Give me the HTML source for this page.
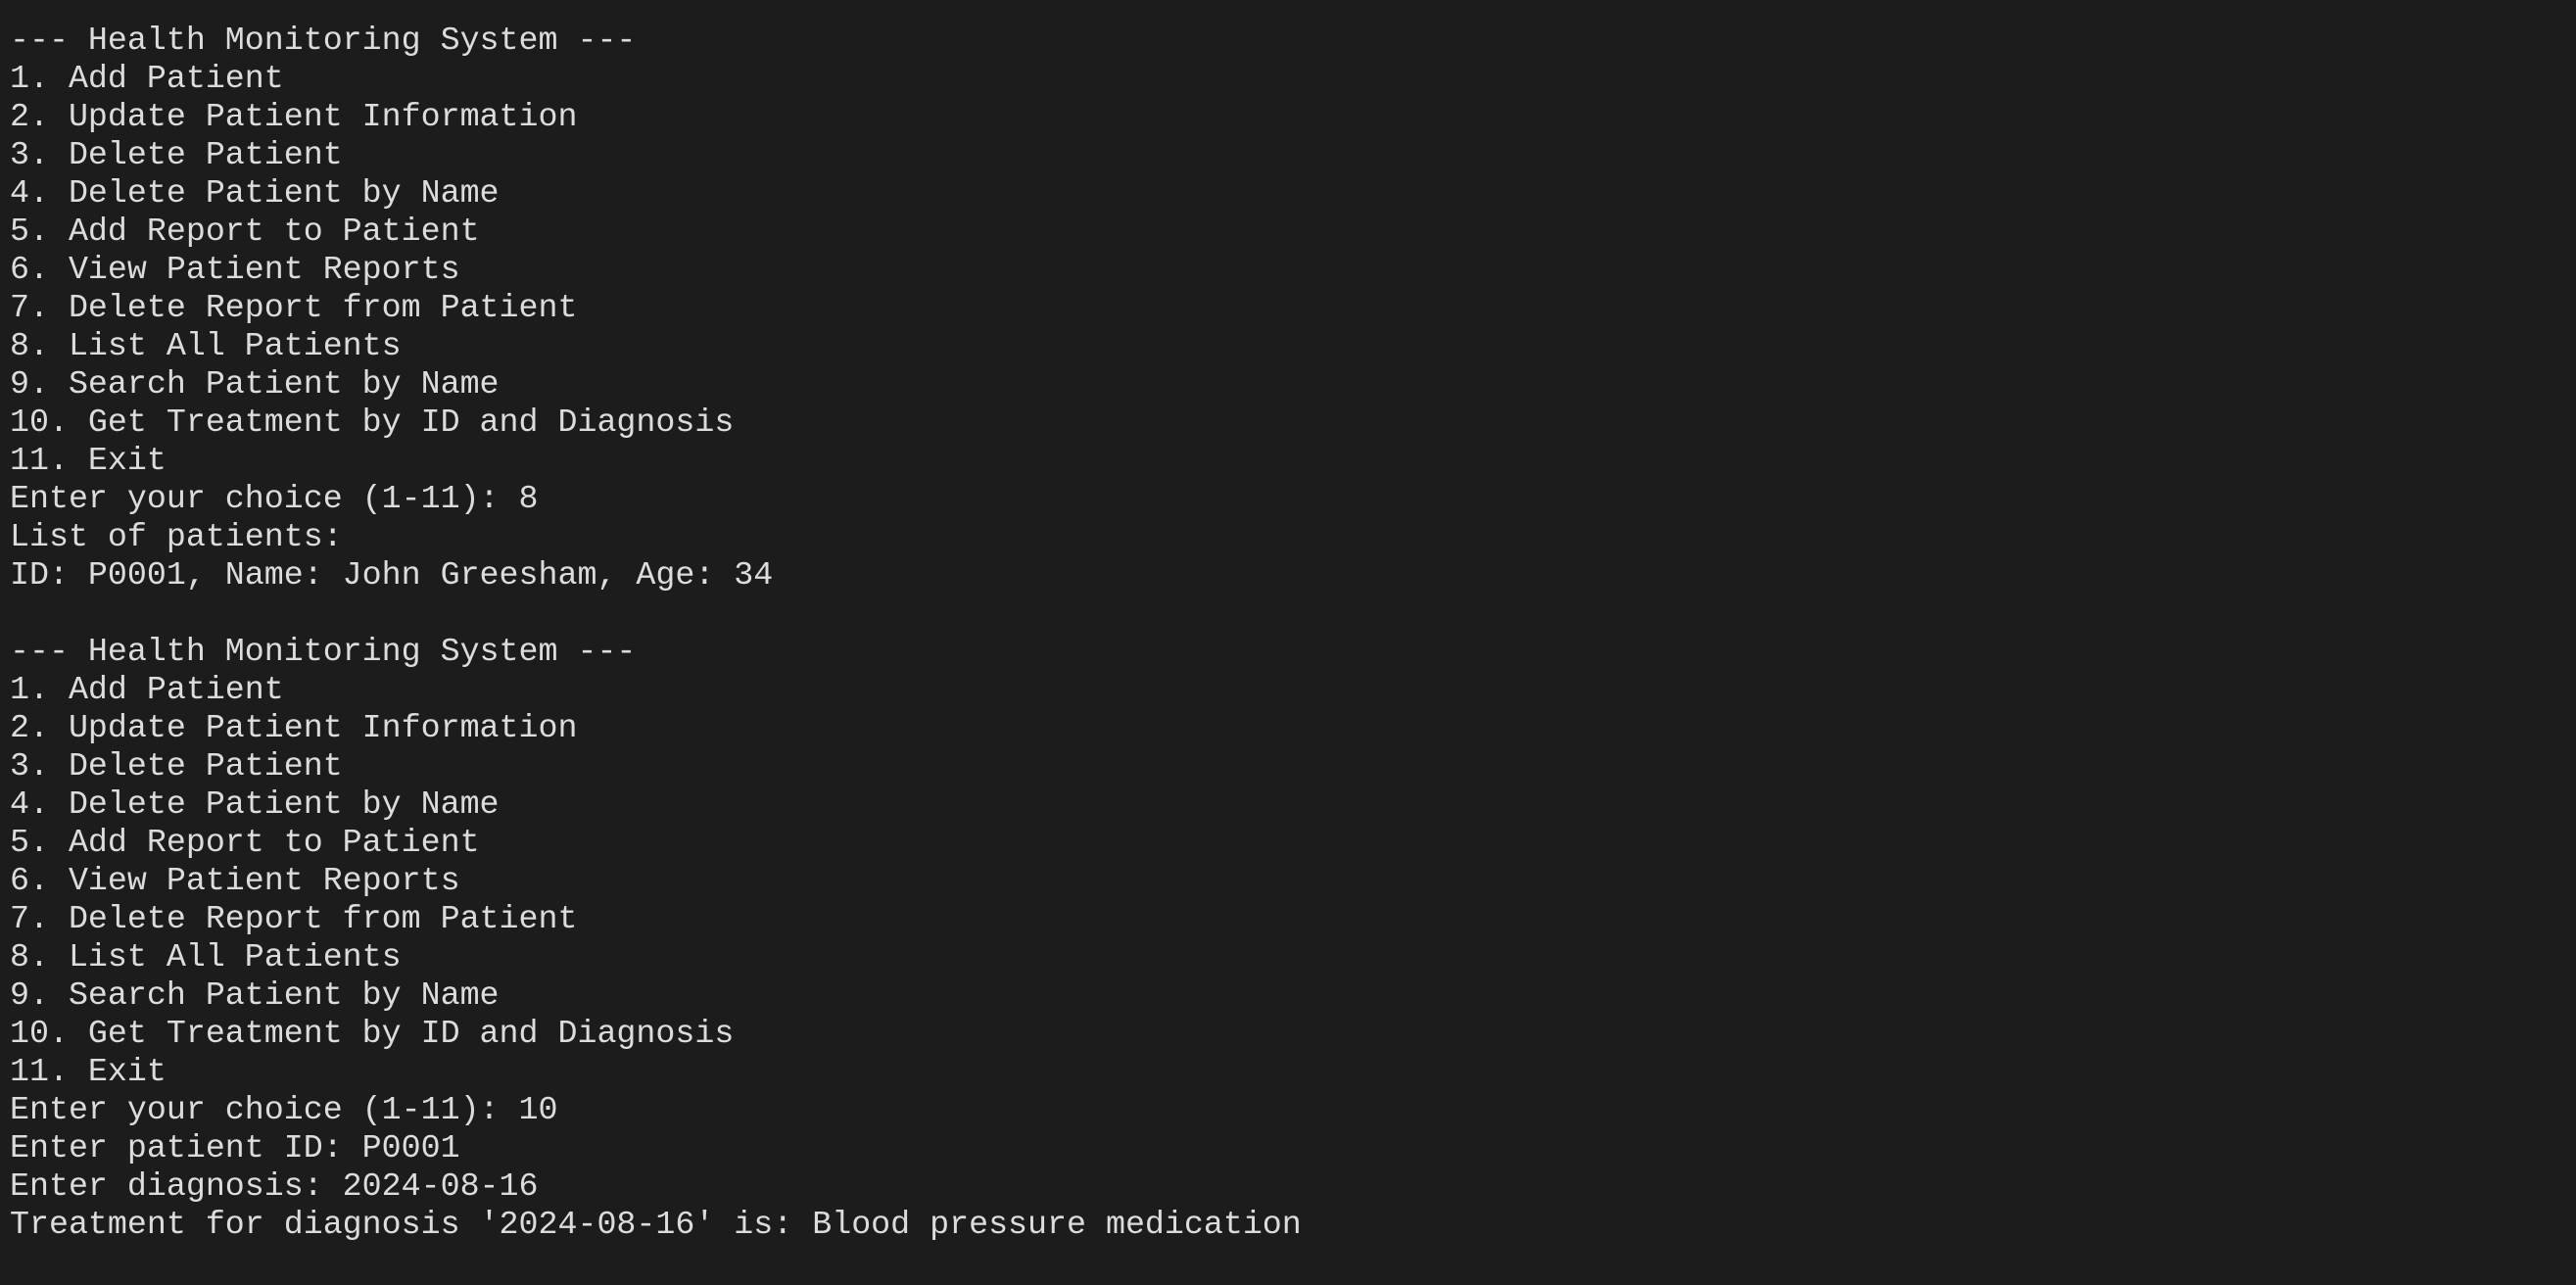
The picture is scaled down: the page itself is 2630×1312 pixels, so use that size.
<!DOCTYPE html>
<html><head><meta charset="utf-8"><style>
html,body{margin:0;padding:0;background:#1c1c1c;width:2630px;height:1312px;overflow:hidden}
pre{margin:0;position:absolute;left:10px;top:22px;font-family:"Liberation Mono","DejaVu Sans Mono",monospace;font-size:33.3px;line-height:39px;color:#dcdcdc;white-space:pre}
</style></head><body><pre>--- Health Monitoring System ---
1. Add Patient
2. Update Patient Information
3. Delete Patient
4. Delete Patient by Name
5. Add Report to Patient
6. View Patient Reports
7. Delete Report from Patient
8. List All Patients
9. Search Patient by Name
10. Get Treatment by ID and Diagnosis
11. Exit
Enter your choice (1-11): 8
List of patients:
ID: P0001, Name: John Greesham, Age: 34

--- Health Monitoring System ---
1. Add Patient
2. Update Patient Information
3. Delete Patient
4. Delete Patient by Name
5. Add Report to Patient
6. View Patient Reports
7. Delete Report from Patient
8. List All Patients
9. Search Patient by Name
10. Get Treatment by ID and Diagnosis
11. Exit
Enter your choice (1-11): 10
Enter patient ID: P0001
Enter diagnosis: 2024-08-16
Treatment for diagnosis '2024-08-16' is: Blood pressure medication</pre></body></html>
